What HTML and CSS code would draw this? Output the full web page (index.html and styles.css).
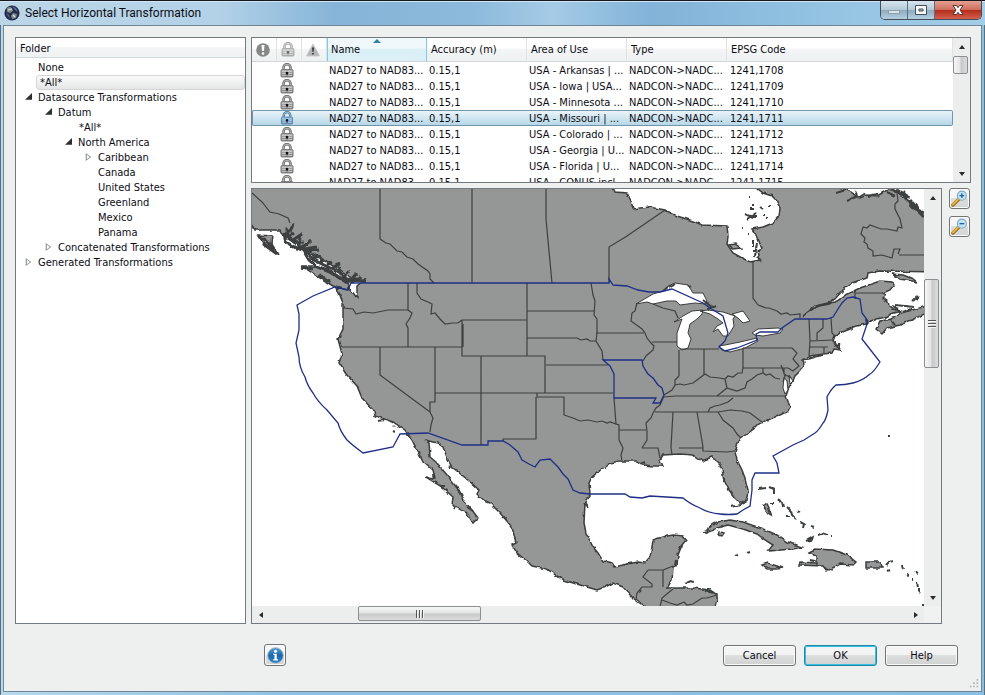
FILE: index.html
```html
<!DOCTYPE html>
<html lang="en">
<head>
<meta charset="utf-8">
<title>Select Horizontal Transformation</title>
<link rel="stylesheet" href="styles.css">
</head>
<body>
<svg class="defs" aria-hidden="true">
  <defs>
    <linearGradient id="steel" x1="0" x2="0" y1="0" y2="1"><stop offset="0" stop-color="#b5b8b6"/><stop offset="1" stop-color="#777a79"/></linearGradient>
    <linearGradient id="blue" x1="0" x2="0" y1="0" y2="1"><stop offset="0" stop-color="#5c9bd0"/><stop offset=".5" stop-color="#1c68ab"/><stop offset="1" stop-color="#2c86c9"/></linearGradient>
    <symbol id="lock" viewBox="0 0 14 15">
      <path d="M3.500 7V4.500a3.500 3.300 0 0 1 7 0V7" fill="none" stroke="#686b6a" stroke-width="2.600"/>
      <path d="M3.500 7V4.500a3.500 3.300 0 0 1 7 0V7" fill="none" stroke="#b9bcba" stroke-width="1"/>
      <rect x="1" y="6.500" width="12" height="7.500" rx="1" fill="url(#steel)" stroke="#7b7e7d"/>
      <path d="M2 8.500h10M2 10.500h10M2 12.500h10" stroke="#d6d8d6" stroke-width=".7"/>
      <circle cx="7" cy="10" r="1.300" fill="#111"/><path d="M6.500 10h1v2.500h-1z" fill="#111"/>
    </symbol>
    <symbol id="lens" viewBox="0 0 18 18">
      <path d="M2 16l7-7" stroke="#8d6a1c" stroke-width="3.600" stroke-linecap="round"/>
      <path d="M2 15.500l7-7" stroke="#f0b840" stroke-width="2" stroke-linecap="round"/>
      <circle cx="11.500" cy="6" r="4.800" fill="#c3e2f5" stroke="#7fa9c6" stroke-width="1.200"/>
    </symbol>
  </defs>
</svg>
<div class="window">
  <header class="titlebar">
    <svg class="app-icon" viewBox="0 0 16 16" aria-hidden="true">
      <circle cx="8" cy="8" r="7.600" fill="#232c4a"/>
      <path d="M3 3q3-2 5 0l1 3-3 2-3-1zM9 8l4 1-1 4-4 1-1-3z" fill="#7b8d8c"/>
      <path d="M2 8l3 2 1 4M8 1l4 2 2 4-3-2z" fill="#5c6aa0"/>
      <path d="M4 5l4-1M9 10l2 2" stroke="#dfe4dc" stroke-width="1.200"/>
    </svg>
    <h1>Select Horizontal Transformation</h1>
    <div class="controls">
      <button class="ctl" type="button" aria-label="Minimize"><svg viewBox="0 0 12 12"><rect x=".5" y="6.500" width="11" height="3" fill="#d9e5ec" stroke="#8aa0ad"/></svg></button>
      <button class="ctl" type="button" aria-label="Maximize"><svg viewBox="0 0 12 12"><path d="M.5 1.500h11v9H.5zM4 5v2h4V5z" fill="#f4f6f7" fill-rule="evenodd" stroke="#44505a"/></svg></button>
      <button class="ctl close" type="button" aria-label="Close"><svg viewBox="0 0 12 12"><path d="M1 1.500h3.500L6 3.700l1.500-2.200H11L8 6l3 4.500H7.500L6 8.300l-1.500 2.200H1L4 6z" fill="#fff" stroke="#5d3434"/></svg></button>
    </div>
  </header>

  <div class="client">
    <main class="panes">
      <nav class="tree-pane" aria-label="Folder">
        <h2 class="tree-head">Folder</h2>
        <ul class="tree">
          <li class="row l0">None</li>
          <li class="row l0 selected">*All*</li>
          <li><span class="row l0 open">Datasource Transformations</span>
            <ul>
              <li><span class="row l1 open">Datum</span>
                <ul>
                  <li class="row l2 all">*All*</li>
                  <li><span class="row l2 open">North America</span>
                    <ul>
                      <li class="row l3 shut">Caribbean</li>
                      <li class="row l3">Canada</li>
                      <li class="row l3">United States</li>
                      <li class="row l3">Greenland</li>
                      <li class="row l3">Mexico</li>
                      <li class="row l3">Panama</li>
                    </ul>
                  </li>
                </ul>
              </li>
              <li class="row l1 shut">Concatenated Transformations</li>
            </ul>
          </li>
          <li class="row l0 shut">Generated Transformations</li>
        </ul>
      </nav>

      <div class="right">
        <section class="list-pane">
          <div class="list-view">
          <table>
            <colgroup><col class="c-icon"><col class="c-icon"><col class="c-icon"><col class="c-text"><col class="c-text"><col class="c-text"><col class="c-text"><col></colgroup>
            <thead>
              <tr>
                <th class="ico" aria-label="Status"><svg width="14" height="14" viewBox="0 0 14 14"><circle cx="7" cy="7" r="6.800" fill="#858887"/><path d="M5.500 2h3L8 8H6z" fill="#fff"/><circle cx="7" cy="10.500" r="1.300" fill="#fff"/></svg></th>
                <th class="ico" aria-label="Locked"><svg class="faded" width="14" height="15"><use href="#lock"/></svg></th>
                <th class="ico" aria-label="Warning"><svg width="14" height="14" viewBox="0 0 14 14"><path d="M7 1l6.500 12H.5z" fill="#b4b6b5" stroke="#c9cbca"/><path d="M6 4.500h2L7.500 9h-1zM6.200 10h1.600v1.600H6.200z" fill="#333"/></svg></th>
                <th class="sorted">Name</th><th>Accuracy (m)</th><th>Area of Use</th><th>Type</th><th>EPSG Code</th>
              </tr>
            </thead>
            <tbody>
              <tr><td></td><td class="ico"><svg width="14" height="15"><use href="#lock"/></svg></td><td></td><td>NAD27 to NAD83...</td><td>0.15,1</td><td>USA - Arkansas | ...</td><td>NADCON-&gt;NADC...</td><td>1241,1708</td></tr>
              <tr><td></td><td class="ico"><svg width="14" height="15"><use href="#lock"/></svg></td><td></td><td>NAD27 to NAD83...</td><td>0.15,1</td><td>USA - Iowa | USA...</td><td>NADCON-&gt;NADC...</td><td>1241,1709</td></tr>
              <tr><td></td><td class="ico"><svg width="14" height="15"><use href="#lock"/></svg></td><td></td><td>NAD27 to NAD83...</td><td>0.15,1</td><td>USA - Minnesota ...</td><td>NADCON-&gt;NADC...</td><td>1241,1710</td></tr>
              <tr class="selected"><td></td><td class="ico"><svg width="14" height="15"><use href="#lock"/></svg></td><td></td><td>NAD27 to NAD83...</td><td>0.15,1</td><td>USA - Missouri | ...</td><td>NADCON-&gt;NADC...</td><td>1241,1711</td></tr>
              <tr><td></td><td class="ico"><svg width="14" height="15"><use href="#lock"/></svg></td><td></td><td>NAD27 to NAD83...</td><td>0.15,1</td><td>USA - Colorado | ...</td><td>NADCON-&gt;NADC...</td><td>1241,1712</td></tr>
              <tr><td></td><td class="ico"><svg width="14" height="15"><use href="#lock"/></svg></td><td></td><td>NAD27 to NAD83...</td><td>0.15,1</td><td>USA - Georgia | U...</td><td>NADCON-&gt;NADC...</td><td>1241,1713</td></tr>
              <tr><td></td><td class="ico"><svg width="14" height="15"><use href="#lock"/></svg></td><td></td><td>NAD27 to NAD83...</td><td>0.15,1</td><td>USA - Florida | U...</td><td>NADCON-&gt;NADC...</td><td>1241,1714</td></tr>
              <tr><td></td><td class="ico"><svg width="14" height="15"><use href="#lock"/></svg></td><td></td><td>NAD27 to NAD83...</td><td>0.15,1</td><td>USA - CONUS incl...</td><td>NADCON-&gt;NADC...</td><td>1241,1715</td></tr>
            </tbody>
          </table>
          </div>
          <div class="scroll vertical list-scroll">
            <button class="arrow up" type="button" aria-label="Scroll list up"></button>
            <span class="thumb"></span>
            <button class="arrow down" type="button" aria-label="Scroll list down"></button>
          </div>
        </section>

        <div class="map-row">
          <section class="map-pane">
            <svg class="map" viewBox="252 189 672 417" preserveAspectRatio="xMidYMid slice" role="img" aria-label="Map of North America with the area of use outlined">
              <defs><filter id="rough" filterUnits="userSpaceOnUse" x="240" y="180" width="700" height="440"><feTurbulence type="fractalNoise" baseFrequency=".2" numOctaves="1" seed="4"/><feDisplacementMap in="SourceGraphic" scale="4" xChannelSelector="R" yChannelSelector="G"/></filter></defs>
              <g class="land" filter="url(#rough)">
                <path d="M245 180H610L615 192 627 193 631 201 633 209 640 208 650 207 665 210 677 216 693 221 702 225 727 226 728 236 727 244 733 253 742 258 750 262 760 260 758 251 762 249 757 236 752 229 763 227 773 223 779 216 780 208 776 200 772 196 763 193 758 189 765 180H840L847 190 853 194 860 198 867 195 877 196 884 192 890 188 903 196 910 204 917 211 935 224V272L880 271 868 273 867 278 853 283 843 290 835 299 828 303 815 306 803 316 816 307 829 304 837 301 847 294 860 288 880 281 892 282 894 285 890 290 883 293 886 295 883 298 888 302 889 306 893 309 901 311 891 314 886 317 877 319 870 322 866 324 853 327 850 329 840 333 835 336 833 341 836 346 841 350 834 349 832 353 823 354 810 356 803 360 804 364 800 371 795 376 792 383 788 390 786 396 790 407 788 411 780 415 770 419 765 422 760 423 755 428 747 434 741 438 737 445 735 452 737 460 742 470 745 478 748 490 747 497 745 503 740 503 735 498 729 490 724 480 722 470 720 465 712 457 702 461 693 455 680 454 663 455 660 460 663 466 653 466 643 465 637 461 620 461 610 463 598 472 592 477 589 483 590 495 585 503 584 523 586 533 593 547 598 553 603 561 612 563 615 567 627 564 638 562 645 563 650 557 652 547 653 540 662 537 673 535 683 536 686 540 682 545 678 555 677 565 673 567 672 580 667 588 680 588 693 588 710 590 717 595 717 600 713 615H650L645 607 633 598 623 587 613 583 605 587 597 590 587 587 563 580 547 569 532 566 527 561 517 553 512 545 516 543 512 527 500 513 490 503 483 500 477 495 479 490 468 480 452 467 448 460 443 447 437 443 425 440 429 443 430 457 437 463 447 475 457 488 463 500 472 510 478 518 473 523 467 513 452 505 453 497 442 487 426 477 435 478 433 470 422 460 417 450 412 440 405 430 393 422 375 416 374 411 362 398 357 386 346 374 339 363 342 354 338 339 343 329 343 303 337 288 350 289 357 298 357 286 365 279 350 278 338 269 320 258 300 246 283 236 280 230H255L245 215Z"/>
                <path d="M302 266L313 266 330 273 343 281 350 286 347 290 333 286 317 276ZM258 235L272 236 271 243 279 255 270 249 262 241ZM892 274L903 275 913 279 917 282 900 279ZM901 313L912 310 935 304V309L916 318 900 325 887 328 882 334 876 329 880 321 892 319ZM707 532L709 527 718 522 730 520 743 522 763 529 777 535 787 542 802 547 793 549 768 551 773 545 765 540 757 534 743 529 728 525 717 528ZM809 552L815 549 833 550 847 555 856 562 853 565 840 564 827 571 823 566 799 565 800 562 817 563 817 557ZM762 565L768 563 783 568 777 569 767 569ZM866 562H881L882 568H866ZM719 532L724 533 722 536 718 535ZM763 506L767 503 769 509 771 515 768 513ZM806 541L813 537 812 540ZM729 245L735 244 741 248 733 249Z"/>
              </g>
              <g class="water">
                <path d="M636 304L653 294 663 291 668 286 675 283 688 285 693 293 703 293 707 301 705 304 695 303 680 305 676 301 667 301 653 304 647 302ZM674 322L683 316 692 311 703 310 702 314 697 319 690 324 688 333 691 339 688 348 682 350 677 346 677 333 682 319ZM700 311L708 310 723 312 735 316 733 319 734 326 728 336 723 336 718 329 713 332 717 326 723 323 718 319 710 314ZM732 314L743 311 750 321 743 323 738 318ZM719 346L725 345 740 342 757 338 758 341 745 348 730 352 722 350ZM752 333L758 329 778 328 783 329 780 333 763 336 755 335ZM784 377L787 381 788 390 785 394 783 388ZM789 375L793 381 790 384Z"/>
              </g>
              <g class="border">
                <path d="M380 189V239M472 189V283M546 189V219L552 283M665 210L627 236 609 247V280M753 261V298L758 305M924 255H899M408 310V283M342 347H462M462 320H527M462 320V356H545V393M527 283V356M481 356V445M380 347V375L430 412M435 347V402H430V412M435 393H613M527 311H595M527 338H577M546 365H608M596 333H644M652 342H677M679 350V376M680 349H719M704 349V375M743 348H792M743 348V368H788M809 319L810 341 809 356M831 318L832 333 835 336M810 341L833 340M809 347H828M824 347V353M664 397L675 396H786M655 412H718M697 412L703 447V451L727 452 735 451M679 448H703M673 412L671 447 672 455M642 448H658L660 458M619 430H646M614 398L616 424 619 425V440M537 393V397H564V415M536 397V439H503V441M648 570H663V587M663 570L673 566M463 324V347"/>
                <path d="M252 193L262 202 270 212 279 214 288 218 290 223M380 239L386 243 390 244 397 251 402 252 407 257 413 259 418 264 428 271 430 274V279L434 283M758 305L766 308 769 308 777 311 781 314 787 313 790 315 800 314V318M897 193L898 201 895 204 895 209 900 219 902 228 898 227 897 231 887 229 881 229 870 225 867 228 863 227 861 234 865 238 864 242 867 244 868 248 873 251 873 256 882 255 892 258 894 249 900 249 898 254M343 308L353 309 356 314 364 312 373 313 388 310H408M408 310L412 313 410 318 406 324 408 328V347M417 283V293L421 299 428 302 432 304 431 314 435 313 440 319 445 324 453 323 458 323 462 320M591 283L593 295 595 301 594 315 597 319V333L596 341 602 351 603 360M577 338L581 340 587 339 590 341 596 341M637 303L635 311 632 313 631 321 642 329 645 333 647 338 651 343 654 346 653 350 646 356 643 361M653 304L663 308 675 311 678 318M679 376L675 380V385L672 390 664 395M675 385L680 384 684 385 693 383 697 380 705 374 710 377 720 378 725 379 728 376 733 377 738 373 742 373 743 368M725 379L727 388 737 391 745 388 747 382 752 379 757 375 763 373 766 375 770 374 775 378 780 379M727 388L722 392 717 396M763 373V368M733 398L728 402 720 405 715 406 710 408 708 412M718 412L730 410 742 411 750 413 762 422M718 412L723 420 733 428 737 434 741 438M664 396L660 405 656 408 653 413 651 418 646 423 647 431 647 440 642 448M619 440L623 448 621 455 622 461M564 415L573 418 580 421 588 420 597 422 602 421 607 423 610 422 616 424M430 412L433 418 431 425 430 432M823 319V328L817 333V340M792 348L797 353 793 359 799 366 793 371 788 368M648 570L643 577 652 584V587H642L637 593 636 600M673 589L668 593 662 598 660 607M662 600L670 603 677 605 684 602 687 605 693 604 702 598 707 598 717 595M855 299V293L883 293M781 365L785 376 783 382M784 368V374L791 378"/>
              </g>
              <g class="fringe" filter="url(#rough)">
                <path d="M283 232L286 242 296 248 303 250 309 260 316 266 328 270 339 277 349 284M284 233L294 242 306 250 314 260 326 266 339 272 347 280 366 281M290 232L293 223M287 238L294 233M293 240L302 234M295 243L304 242M303 247L311 240M305 249L316 247M309 251L319 250M310 256L319 258M312 258L320 256M321 264L322 257M327 265L332 262M333 268L340 263M338 272L341 266M344 278L349 270M350 281L356 274M357 281L361 276M287 238L288 230M298 247L300 238M286 229L290 233M259 237L266 240 274 250 M262 243L277 254M301 267L313 269 M318 275L330 281 M890 189L903 195 911 204 919 212 924 217M897 190L907 197M910 200L918 209M903 191L909 199M912 207L924 213" class="thick"/>
                <path d="M836 192L846 189M847 201L858 196M858 198L866 193M868 196L877 194M887 192L895 196M857 195L855 191M745 214L754 218M747 219L756 213M748 216H757M750 209H754M760 207L763 209M763 215H765M766 219H768M752 205H754M742 229H743M748 234H749M753 240V247M757 243L755 256M752 251H756M758 257L761 262M749 197H750M741 190H742M769 206H771M669 288L675 284M687 285L690 287M703 300L713 308M707 309L717 306M663 291L668 287M892 306L898 309M895 305L914 307M913 301L918 296M916 300L919 297M903 312L911 309M895 325L891 320M836 346L840 344M839 349V343M808 359L822 355M378 421L384 420M394 427L395 426M393 431L395 432M440 486L445 486M452 504L455 509M458 489L462 496M467 507L473 511M449 468L450 465M433 474L434 479M584 503L588 507M586 534L588 536M641 464L646 462M724 478V481M731 507L741 505 746 501M758 489L766 488 M769 487L774 489V494M778 499L783 503 784 507M770 503H774M787 507L791 511 792 515 796 519M785 517L790 517M797 513L799 512M800 522L804 524 803 528M811 527L814 528M818 535L823 533 828 535M830 536H831M735 556L738 555M747 553L750 552M703 532L708 531M810 560L815 561M886 565L889 562 893 561M888 571L890 570M903 566L904 569M906 574L909 575M912 580H913M915 572L917 573M917 583L918 587M919 588V592M920 592L919 593M922 598V599M923 604V606M888 436H890M685 583L690 581 694 582M682 545L679 550M676 560L675 565M866 319L867 325M640 593L641 590M705 590L714 593"/>
              </g>
              <g class="extent">
                <path d="M297 305L313 296 335 287 348 290 351 283H609V279L613 285 627 286 638 290 649 292 660 292 672 289 703 303 710 308 723 316 728 333 725 341 719 347 725 351 737 348 757 340 756 334 760 332H778L782 328 795 319H827L833 317 838 309 842 303 847 298 853 297 860 299 862 313 868 321 862 339 880 362Q873 373 870 374 862 381 853 383 845 385 836 385 832 388 828 395L827 397 828 410Q826 420 823 423 819 430 815 433L804 440 793 445 773 456 777 463 779 473H755L752 480V490L750 506 743 510 737 514Q728 515 720 514 708 513 700 508 690 504 683 498L650 496 642 498 630 497 625 494H590L580 493 573 490 568 479 563 474 558 467 550 459 540 460 535 467 529 464 522 460 518 452 510 445 503 441H488V445H462L428 433 400 434 393 447 363 453Q351 444 347 440 340 431 338 423L327 410Q318 402 313 393 307 385 305 377 299 367 299 357L296 343 299 330V314ZM603 360H642L643 366 648 374 653 378 658 385 662 388 664 395 660 403H653L656 398H614V374L610 366Z"/>
              </g>
            </svg>
            <div class="scroll vertical map-vscroll">
              <button class="arrow up" type="button" aria-label="Scroll map up"></button>
              <span class="thumb grip"></span>
              <button class="arrow down" type="button" aria-label="Scroll map down"></button>
            </div>
            <div class="scroll horizontal map-hscroll">
              <button class="arrow left" type="button" aria-label="Scroll map left"></button>
              <span class="thumb grip"></span>
              <button class="arrow right" type="button" aria-label="Scroll map right"></button>
            </div>
            <span class="corner"></span>
          </section>
          <div class="tools">
            <button class="tool" type="button" aria-label="Zoom in"><svg viewBox="0 0 18 18"><use href="#lens"/><path d="M9 6h5M11.500 3.500v5" stroke="#1d5f96" stroke-width="1.400"/></svg></button>
            <button class="tool" type="button" aria-label="Zoom out"><svg viewBox="0 0 18 18"><use href="#lens"/><path d="M9 6h5" stroke="#1d5f96" stroke-width="1.400"/></svg></button>
          </div>
        </div>
      </div>
    </main>

    <footer class="actions">
      <button class="tool info" type="button" aria-label="Information"><svg viewBox="0 0 18 18"><circle cx="9" cy="9" r="8.300" fill="url(#blue)" stroke="#a9bdcd"/><circle cx="9" cy="4.500" r="1.600" fill="#fff"/><path d="M6.500 7.200H10.300V13H11.700V14.200H6.500V13H7.900V8.300H6.500z" fill="#fff"/></svg></button>
      <div class="buttons">
        <button class="btn" type="button">Cancel</button>
        <button class="btn default" type="button">OK</button>
        <button class="btn" type="button">Help</button>
      </div>
      <svg class="size-grip" viewBox="0 0 12 12" aria-hidden="true"><path d="M9 1h2M9 5h2M9 9h2M5 5h2M5 9h2M1 9h2" stroke="#b0b3b5" stroke-width="2"/></svg>
    </footer>
  </div>
</div>
</body>
</html>
```
FILE: styles.css
```css
* { box-sizing: border-box; }
body {
  margin: 0;
  font: 11px/15px "DejaVu Sans Condensed", "Noto Sans", sans-serif;
  color: #0c0c14;
}
h1, h2, ul { margin: 0; padding: 0; font: inherit; }
ul { list-style: none; }
button { font: inherit; color: inherit; padding: 0; }
.defs { position: absolute; width: 0; height: 0; }

.window {
  height: 100vh;
  display: flex;
  flex-direction: column;
  padding: 0 3px 3px;
  border-top: 1px solid #15191f;
  background: linear-gradient(90deg, #b9d8ec, #8fc0e2 30%, #8abfe2);
  box-shadow: inset 1px 0 #55707f, inset -1px 0 #55707f;
}
.titlebar {
  display: flex;
  align-items: center;
  height: 24px;
  margin: 0 -3px;
  padding-left: 4px;
  background: linear-gradient(90deg, #bcd6e7, #b3d2e8 22%, #86b4d8 34%, #8cbadc 48%, #a5cbe6 56%, #82b3d8 66%, #92c2e2 82%, #a4cde8);
  box-shadow: inset 0 1px #d3e6f2;
}
.app-icon { width: 16px; height: 16px; }
h1 { flex: 1; padding-left: 5px; font-family: Roboto, "Noto Sans", sans-serif; font-size: 12px; line-height: 22px; }
.controls { align-self: flex-start; display: flex; margin-right: 3px; border: 1px solid #414f5b; border-top: 0; border-radius: 0 0 5px 5px; overflow: hidden; }
.ctl {
  width: 27px;
  height: 18px;
  display: grid;
  place-items: center;
  border: 0;
  border-right: 1px solid #5b6f7e;
  background: linear-gradient(#d7e5ee, #b4c9d7 48%, #8da9bd 50%, #b3cfe0);
}
.ctl svg { width: 12px; height: 12px; }
.ctl.close { width: 46px; border-right: 0; background: linear-gradient(#e5a092, #cf6f5d 48%, #b32b1b 50%, #d5604d); }

.client {
  flex: 1;
  min-height: 0;
  display: flex;
  flex-direction: column;
  border: 1px solid #6f8594;
  background: #eeefef;
}
.panes { flex: 1; min-height: 0; display: flex; gap: 5px; padding: 11px 10px 0 11px; }

.tree-pane { width: 231px; border: 1px solid #737a80; background: #fff; }
.tree-head, th { background: linear-gradient(#fff 45%, #f3f5f6 47%, #eef1f2); border-bottom: 1px solid #d2d6d8; }
.tree-head { height: 20px; padding: 3px 4px 0; margin-bottom: 2px; }
.row { display: block; position: relative; height: 15px; line-height: 15px; white-space: nowrap; }
.l0 { margin-left: 20px; padding-left: 2px; }
.l1 { padding-left: 42px; }
.l2 { padding-left: 62px; }
.l2.all { padding-left: 63px; }
.l3 { padding-left: 82px; }
.row.selected { padding-left: 3px; line-height: 13px; border: 1px solid #d4d7d6; border-radius: 3px; background: linear-gradient(#fafafa, #e4e6e5); }
.open::before, .shut::before { content: ""; display: inline-block; width: 7px; height: 8px; margin: 0 6px 0 -13px; }
.open::before { clip-path: polygon(100% 0, 100% 85%, 0 85%); background: #2e2e2e; }
.shut::before { background: #8e9293; clip-path: polygon(evenodd, 10% 0, 90% 50%, 10% 100%, 10% 0, 26% 22%, 26% 78%, 68% 50%, 26% 22%); }

.right { flex: 1; min-width: 0; display: flex; flex-direction: column; gap: 5px; }
.list-pane { display: flex; height: 146px; border: 1px solid #737a80; background: #fff; }
.list-view { flex: 1; min-width: 0; overflow: hidden; }
table { width: 100%; table-layout: fixed; border-collapse: separate; border-spacing: 0; }
.c-icon { width: 25px; }
.c-text { width: 100px; }
th, td { padding: 0 2px; text-align: left; font-weight: normal; white-space: nowrap; overflow: hidden; }
th { height: 24px; padding: 0 4px; border-right: 1px solid #e0e3e4; }
th.ico, td.ico { padding: 0; }
th.ico svg { display: block; margin: 0 auto 0 4px; }
td.ico svg { display: block; margin: 0 auto 0 3px; }
td:nth-child(8) { padding-left: 3px; }
td { height: 16px; padding-top: 2px; line-height: 14px; }
td.ico { overflow: visible; }
.faded { opacity: .6; }
th.sorted {
  position: relative;
  border-right-color: #78cdee;
  background: linear-gradient(#f0f8fb 45%, #dbeff6 47%);
  box-shadow: inset 1px 0 #78cdee;
}
th.sorted::after { content: ""; position: absolute; top: 1px; left: 46px; border: 4px solid transparent; border-top: 0; border-bottom: 4px solid #3280a4; }
tr.selected td { padding-top: 1px; border: 1px solid #7195ab; border-width: 1px 0; background: linear-gradient(#eaf4f9, #b6d7e8); line-height: 13px; }
tr.selected td:first-child { border-left-width: 1px; border-radius: 2px 0 0 2px; }
tr.selected td:last-child { border-right-width: 1px; border-radius: 0 2px 2px 0; }
tr.selected td.ico { padding-top: 0; }
tr.selected svg { height: 14px; filter: sepia(1) hue-rotate(170deg) saturate(1.4) brightness(.85); }

.scroll { display: grid; background: #eceeed; }
.vertical { width: 17px; }
.list-scroll { grid-template-rows: 18px 18px 1fr 17px; }
.list-scroll .down { grid-row: 4; }
.map-vscroll { grid-template-rows: 17px 73fr 89px 221fr 17px; }
.map-vscroll .thumb { grid-row: 3; }
.map-vscroll .down { grid-row: 5; }
.horizontal { height: 17px; }
.map-hscroll { grid-template-columns: 17px 89fr 123px 426fr 17px; }
.map-hscroll .thumb { grid-column: 3; }
.map-hscroll .right { grid-column: 5; }
.thumb { display: grid; place-items: center; border: 1px solid #8b8f91; border-radius: 2px; background: linear-gradient(90deg, #f6f6f6, #e2e4e3 48%, #c6c9c8 52%, #dcdedd); }
.vertical .thumb { margin-right: 2px; }
.horizontal .thumb { margin: 0 0 2px; background: linear-gradient(#f6f6f6, #e2e4e3 48%, #c6c9c8 52%, #dcdedd); }
.grip::before { content: ""; width: 8px; height: 8px; background: repeating-linear-gradient(#555 0 1px, #f5f5f5 1px 2px, transparent 2px 3px); }
.horizontal .grip::before { background: repeating-linear-gradient(90deg, #555 0 1px, #f5f5f5 1px 2px, transparent 2px 3px); }
.arrow { border: 0; background: none; display: grid; place-items: center; }
.arrow::before { content: ""; border: 3px solid transparent; }
.up::before { border-top: 0; border-bottom: 4px solid #2b2b2b; }
.down::before { border-bottom: 0; border-top: 4px solid #2b2b2b; }
.arrow.left::before { border-left: 0; border-right: 4px solid #2b2b2b; }
.arrow.right::before { border-right: 0; border-left: 4px solid #2b2b2b; }

.map-row { flex: 1; min-height: 0; display: flex; gap: 7px; }
.map-pane {
  flex: 1;
  min-width: 0;
  display: grid;
  grid-template: minmax(0, 1fr) 17px / minmax(0, 1fr) 17px;
  border: 1px solid #737a80;
  background: #fff;
}
.map { display: block; width: 100%; height: 100%; min-height: 0; }
.corner { background: #f0f1f1; }
.land { fill: #959796; stroke: #3a3d3c; stroke-width: 1.5; }
.water { fill: #fff; stroke: #3a3d3c; }
.border, .fringe { fill: none; stroke: #3d403f; }
.border { stroke-width: 1.2; }
.fringe { stroke-width: 2; }
.thick { stroke-width: 3; }
.extent { fill: none; stroke: #1e2f87; stroke-width: 1.3; }

.tools { width: 22px; display: flex; flex-direction: column; gap: 7px; }
.tool {
  width: 21px;
  height: 21px;
  display: grid;
  place-items: center;
  border: 1px solid #707473;
  border-radius: 3px;
  background: linear-gradient(#f6f6f6 48%, #dddfde 50%, #d3d5d4);
  box-shadow: inset 0 0 0 1px #fafafa;
}
.tool svg { width: 17px; height: 17px; }

.actions { position: relative; display: flex; align-items: flex-start; justify-content: space-between; height: 67px; padding: 20px 23px 0 260px; }
.tool.info { width: 22px; height: 22px; }
.buttons { display: flex; gap: 8px; padding-top: 1px; }
.btn {
  width: 73px;
  height: 21px;
  border: 1px solid #707473;
  border-radius: 3px;
  background: linear-gradient(#f4f4f4 48%, #dddfde 50%, #cfd2d0);
  box-shadow: inset 0 0 0 1px #fafafa;
}
.btn.default { border-color: #1f86a6; box-shadow: inset 0 0 0 1px #35bfe0; }
.size-grip { position: absolute; right: 2px; bottom: 2px; width: 10px; height: 10px; }
```
